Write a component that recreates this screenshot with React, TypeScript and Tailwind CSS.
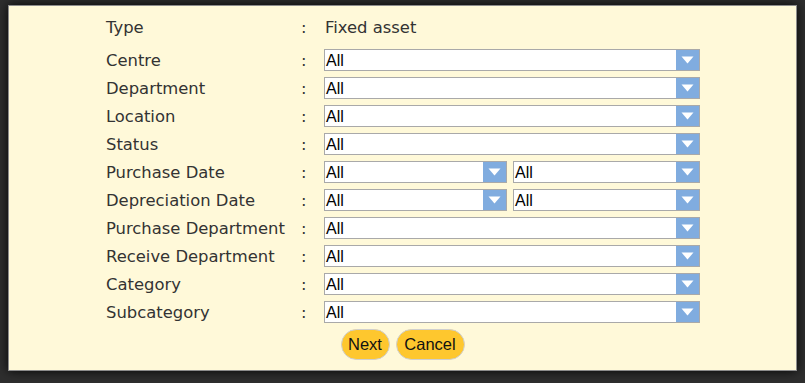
import React from 'react';

const labelFont = { fontFamily: '"DejaVu Sans", Verdana, sans-serif' };

function Arrow() {
  return (
    <div className="flex h-full w-[23px] shrink-0 items-center justify-center bg-[#80acdf]">
      <svg width="13" height="8" viewBox="0 0 13 8">
        <path d="M0.5 0.5 L12.5 0.5 L6.5 7.5 Z" fill="#ffffff" />
      </svg>
    </div>
  );
}

function Select({ value = 'All' }: { value?: string }) {
  return (
    <div className="flex h-[22px] flex-1 items-center border border-[#a9a9a9] bg-white">
      <span className="flex-1 pl-[1px] pt-[1px] text-[16px] leading-none text-black font-['Liberation_Sans',Arial,sans-serif]">
        {value}
      </span>
      <Arrow />
    </div>
  );
}

const rows: { label: string; split?: boolean }[] = [
  { label: 'Centre' },
  { label: 'Department' },
  { label: 'Location' },
  { label: 'Status' },
  { label: 'Purchase Date', split: true },
  { label: 'Depreciation Date', split: true },
  { label: 'Purchase Department' },
  { label: 'Receive Department' },
  { label: 'Category' },
  { label: 'Subcategory' },
];

export default function App() {
  return (
    <div className="h-[383px] w-[805px] overflow-hidden bg-[#2e2e2e] pl-[8px] pt-[5px]">
      <div className="flex h-[366px] w-[789px] flex-col border border-[#8c8c8c] bg-[#fff9d9] pt-[10px] shadow-[0_0_10px_rgba(0,0,0,0.9)]">
        <div className="ml-[97px] text-[16.4px] text-[#333333]" style={labelFont}>
          <div className="mb-[11px] flex h-[22px] items-center pt-[2px]">
            <div className="w-[194px]">Type</div>
            <div className="w-[24px] pl-[1px]">:</div>
            <div className="pl-[1px]">Fixed asset</div>
          </div>
          <div className="flex flex-col gap-[6px]">
            {rows.map((r) => (
              <div key={r.label} className="flex h-[22px] items-center">
                <div className="w-[194px] whitespace-nowrap pt-[2px]">{r.label}</div>
                <div className="w-[24px] pl-[1px] pt-[2px]">:</div>
                <div className="flex w-[376px] gap-[6px]">
                  {r.split ? (
                    <>
                      <div className="flex w-[183px]">
                        <Select />
                      </div>
                      <div className="flex w-[187px]">
                        <Select />
                      </div>
                    </>
                  ) : (
                    <Select />
                  )}
                </div>
              </div>
            ))}
          </div>
        </div>
        <div className="mt-[6px] flex justify-center gap-[6px] font-['Liberation_Sans',Arial,sans-serif] text-[16.5px] text-[#111]">
          <button className="h-[31px] w-[49px] rounded-full border border-[#cfcfcf] bg-[#fec72e]">Next</button>
          <button className="h-[31px] w-[69px] rounded-full border border-[#cfcfcf] bg-[#fec72e]">Cancel</button>
        </div>
      </div>
    </div>
  );
}
